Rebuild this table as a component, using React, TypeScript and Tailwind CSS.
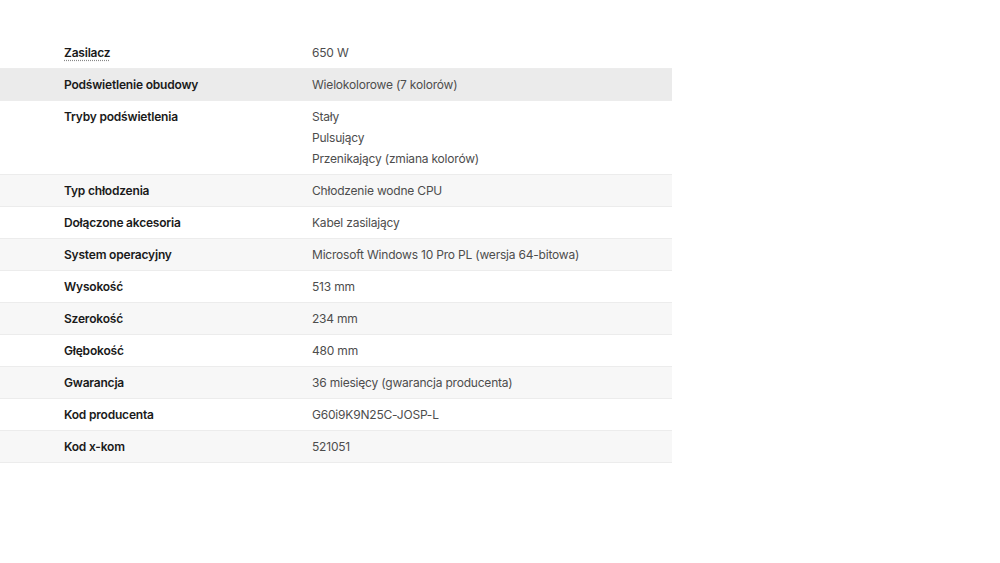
const rows: { label: string; values: string[]; dotted?: boolean }[] = [
  { label: 'Zasilacz', values: ['650 W'], dotted: true },
  { label: 'Podświetlenie obudowy', values: ['Wielokolorowe (7 kolorów)'] },
  { label: 'Tryby podświetlenia', values: ['Stały', 'Pulsujący', 'Przenikający (zmiana kolorów)'] },
  { label: 'Typ chłodzenia', values: ['Chłodzenie wodne CPU'] },
  { label: 'Dołączone akcesoria', values: ['Kabel zasilający'] },
  { label: 'System operacyjny', values: ['Microsoft Windows 10 Pro PL (wersja 64-bitowa)'] },
  { label: 'Wysokość', values: ['513 mm'] },
  { label: 'Szerokość', values: ['234 mm'] },
  { label: 'Głębokość', values: ['480 mm'] },
  { label: 'Gwarancja', values: ['36 miesięcy (gwarancja producenta)'] },
  { label: 'Kod producenta', values: ['G60i9K9N25C-JOSP-L'] },
  { label: 'Kod x-kom', values: ['521051'] },
];

export default function App() {
  return (
    <div className="w-[1000px] h-[563px] bg-white pt-[37px] font-['Inter',sans-serif] text-[12px]">
      <div className="w-[672px]">
        {rows.map((row, i) => (
          <div
            key={row.label}
            className={
              'flex border-b border-[#ececec] py-[5px] ' +
              (i === 1 ? 'bg-[#ebebeb]' : i % 2 === 1 ? 'bg-[#f7f7f7]' : 'bg-white')
            }
          >
            <div className="w-[312px] shrink-0 pl-[64px] leading-[21px] font-semibold text-[#1a1a1a] tracking-[-0.2px]">
              {row.dotted ? (
                <span className="underline decoration-dotted decoration-[#888] underline-offset-[3px]">{row.label}</span>
              ) : (
                row.label
              )}
            </div>
            <div className="flex flex-col leading-[21px] text-[#4d4d4d] tracking-[-0.2px]">
              {row.values.map((v) => (
                <span key={v}>{v}</span>
              ))}
            </div>
          </div>
        ))}
      </div>
    </div>
  );
}
